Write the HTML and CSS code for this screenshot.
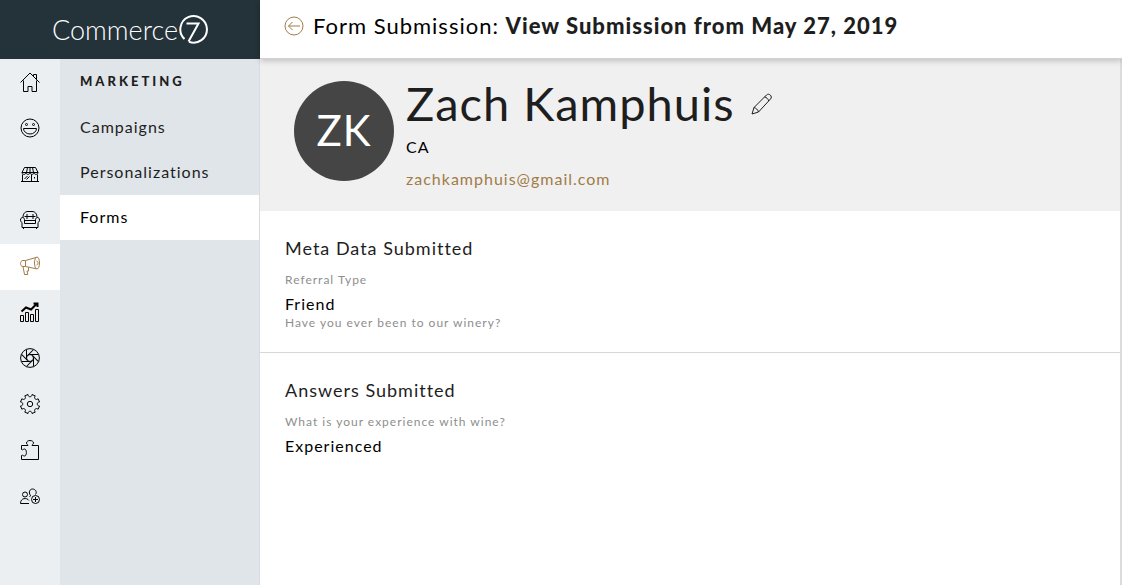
FILE: index.html
```html
<!DOCTYPE html>
<html lang="en">
<head>
  <meta charset="utf-8">
  <meta name="viewport" content="width=device-width, initial-scale=1">
  <title>Form Submission</title>
  <link rel="stylesheet" href="styles.css">
</head>
<body>
  <aside class="sidebar">
    <a class="logo" href="#" aria-label="Commerce7">
      <span>Commerce</span>
      <svg width="30" height="30" viewBox="0 0 30 30">
        <path d="M6.500 25A13.300 13.300 0 1 1 11 27.800"/>
        <path d="M8.500 9.500H20.500L10.500 27.500"/>
      </svg>
    </a>
    <div class="menus">
      <nav class="icon-nav">
        <a href="#" aria-label="Home">
          <svg viewBox="0 0 20 20"><path d="M.5 10.500 10 1l9.500 9.500M13.500 4V2.500h3V7.500M3.500 8.500v11h4.500v-5h4v5h4.500v-11"/></svg>
        </a>
        <a href="#" aria-label="Customers">
          <svg viewBox="0 0 20 20"><circle cx="10" cy="10" r="9"/><circle cx="6.500" cy="6.500" r="1"/><circle cx="13.500" cy="6.500" r="1"/><path d="M3.500 10.500h13a6.500 5.500 0 0 1-13 0z"/></svg>
        </a>
        <a href="#" aria-label="Store">
          <svg viewBox="0 0 20 20"><path d="M4.500 3.500h11L18 8.500H2zM7.500 3.500l-1 5M12.500 3.500l1 5M10 3.500v5M2 8.500c0 2.500 4 2.500 4 0 0 2.500 4 2.500 4 0 0 2.500 4 2.500 4 0 0 2.500 4 2.500 4 0M2.500 10.500v7M17.500 10.500v7M1 17.500h18M11.500 17.500v-7M4.500 15l3-3M6.500 15.500l3-3M14.500 13v1.500"/></svg>
        </a>
        <a href="#" aria-label="Club">
          <svg viewBox="0 0 20 20"><path d="M3 7.500C3 3.500 5 1.500 8 1.500h4c3 0 5 2 5 6M4.500 13.500v-4c-.5-3-4-2.500-4 .5 0 1 .5 2 1.500 2.500v5h16v-5c1-.5 1.500-1.500 1.500-2.500 0-3-3.500-3.500-4-.5v4zM4.500 10.500h11M3.500 17.500V19M16.500 17.500V19"/><path d="M7 4v5M13 4v5M4.500 6.500h11"/></svg>
        </a>
        <a class="active" href="#" aria-label="Marketing">
          <svg viewBox="0 0 20 20"><path d="M5.500 4.500 16 1.500M5.500 10.500l10.500 2.200M5.500 4.500H3C-.3 4.500-.3 10.500 3 10.500h2.500zM3 10.500l1.500 8h3.300L7 15h1.500V11.300M16.500 5c2 0 2 4 0 4"/><ellipse cx="17" cy="7" rx="2.500" ry="6"/></svg>
        </a>
        <a href="#" aria-label="Reports">
          <svg viewBox="0 0 20 20"><path d="M.5 13.500h3v6h-3zM5.500 10.500h3v9h-3zM10.500 12.500h3v7h-3zM15.500 7.500h3v12h-3z"/><path class="thick" d="M1.500 9.500 6 5.500l5 2L17 1.500M13.500 1.500H17.500V5"/></svg>
        </a>
        <a href="#" aria-label="Gallery">
          <svg viewBox="0 0 20 20">
            <circle cx="10" cy="10" r="9.400"/>
            <circle cx="10" cy="10" r="3.500"/>
            <path d="M13.500 10v8.500"/>
            <path d="M13.500 10v8.500" transform="rotate(45 10 10)"/>
            <path d="M13.500 10v8.500" transform="rotate(90 10 10)"/>
            <path d="M13.500 10v8.500" transform="rotate(135 10 10)"/>
            <path d="M13.500 10v8.500" transform="rotate(180 10 10)"/>
            <path d="M13.500 10v8.500" transform="rotate(225 10 10)"/>
            <path d="M13.500 10v8.500" transform="rotate(270 10 10)"/>
            <path d="M13.500 10v8.500" transform="rotate(315 10 10)"/>
          </svg>
        </a>
        <a href="#" aria-label="Settings">
          <svg viewBox="0 0 20 20"><circle cx="10" cy="10" r="2.700"/><path d="M8 .5 C8 3.500 12 3.500 12 .5L15.300 1.900C13.200 4 16 6.800 18.100 4.700L19.500 8C16.500 8 16.500 12 19.500 12L18.100 15.300C16 13.200 13.200 16 15.300 18.100L12 19.500C12 16.500 8 16.500 8 19.500L4.700 18.100C6.800 16 4 13.200 1.900 15.300L.5 12C3.500 12 3.500 8 .5 8L1.900 4.700C4 6.800 6.800 4 4.700 1.900z"/></svg>
        </a>
        <a href="#" aria-label="Apps">
          <svg viewBox="0 0 20 20"><path d="M1.500 9.500v-4h6.500C8 4.500 6.500 4.500 6.500 3c0-3.300 7-3.300 7 0 0 1.500-1.500 1.500-1.500 2.500h6.500v14h-17v-4c1.500-1 1.500.5 3 .5 2.500 0 2.500-7 0-7-1.500 0-1.500 1.500-3 .5z"/></svg>
        </a>
        <a href="#" aria-label="Users">
          <svg viewBox="0 0 20 20"><circle cx="5" cy="8.500" r="2.500"/><path d="M9 17.500H.5c0-6 6.500-6 8.500-3M10.500 9.500C8 6 10 3 12.500 3s5 2.500 3 5.500M11 9.500l-1.500 1"/><circle cx="15.500" cy="13.500" r="4"/><path d="M15.500 11v5M13 13.500h5"/></svg>
        </a>
      </nav>
      <nav class="sub-nav">
        <h2>Marketing</h2>
        <a href="#">Campaigns</a>
        <a href="#">Personalizations</a>
        <a class="active" href="#">Forms</a>
      </nav>
    </div>
  </aside>
  <main>
    <header class="top-bar">
      <a class="back" href="#" aria-label="Back">
        <svg viewBox="0 0 20 20"><circle cx="10" cy="10" r="9"/><path d="M16 10H4.500M8.500 6l-4 4 4 4"/></svg>
      </a>
      <h1>Form Submission: <strong>View Submission from May 27, 2019</strong></h1>
    </header>
    <div class="content">
      <section class="profile">
        <div class="avatar">ZK</div>
        <div class="details">
          <div class="name">
            <h2>Zach Kamphuis</h2>
            <button type="button" aria-label="Edit">
              <svg viewBox="0 0 22 22"><path d="M1 21l2-6.500L15.500 2c2.500-2.500 6.500 1.500 4 4L7.500 19zM13.500 4c2 .3 3.800 2 4.200 4M3 14.500c2 .5 3.800 2 4.500 4.500"/></svg>
            </button>
          </div>
          <p>CA</p>
          <a href="mailto:zachkamphuis@gmail.com">zachkamphuis@gmail.com</a>
        </div>
      </section>
      <section class="answers">
        <h3>Meta Data Submitted</h3>
        <dl>
          <dt>Referral Type</dt>
          <dd>Friend</dd>
          <dt>Have you ever been to our winery?</dt>
        </dl>
      </section>
      <section class="answers">
        <h3>Answers Submitted</h3>
        <dl>
          <dt>What is your experience with wine?</dt>
          <dd>Experienced</dd>
        </dl>
      </section>
    </div>
  </main>
</body>
</html>
```
FILE: styles.css
```css
* {
  box-sizing: border-box;
}

body {
  display: flex;
  min-height: 100vh;
  margin: 0;
  background: #fff;
  color: #000;
  font-family: 'Lato', sans-serif;
  font-size: 16px;
  letter-spacing: 1px;
}

h1, h2, h3, p, dl, dd {
  margin: 0;
  font-weight: normal;
}

a {
  color: inherit;
  text-decoration: none;
}

svg {
  fill: none;
  stroke: currentColor;
}

/* sidebar */
.sidebar {
  display: flex;
  flex-direction: column;
  width: 260px;
  flex-shrink: 0;
}

.logo {
  display: flex;
  align-items: center;
  justify-content: center;
  height: 59px;
  padding-bottom: 1px;
  background: #243239;
  color: #fff;
  font-size: 27px;
  font-weight: 300;
  letter-spacing: 0;
}

.logo svg {
  stroke-width: 2;
}

.menus {
  display: flex;
  flex: 1;
}

.icon-nav {
  width: 60px;
  padding-top: 1px;
  background: #ebeff2;
}

.icon-nav a {
  display: flex;
  align-items: center;
  justify-content: center;
  height: 46px;
  padding-bottom: 2px;
}

.icon-nav svg {
  width: 20px;
  height: 20px;
}

.icon-nav .thick {
  stroke-width: 2;
}

.icon-nav .active {
  background: #fff;
  color: #a07c48;
}

.sub-nav {
  flex: 1;
  border-right: 1px solid #d8dcdf;
  background: #e0e5e9;
  color: #1e1e1e;
}

.sub-nav h2 {
  padding: 0 20px 2px;
  font-size: 13px;
  font-weight: 900;
  letter-spacing: 3px;
  line-height: 44px;
  text-transform: uppercase;
}

.sub-nav a {
  display: block;
  padding: 0 20px 2px;
  line-height: 43px;
}

.sub-nav .active {
  background: #fff;
  color: #000;
}

/* page */
main {
  display: flex;
  flex: 1;
  flex-direction: column;
  min-width: 0;
}

.top-bar {
  position: relative;
  display: flex;
  align-items: center;
  gap: 9px;
  height: 59px;
  padding: 0 24px 8px;
  border-bottom: 1px solid #d2d2d2;
  box-shadow: 0 2px 6px rgba(0, 0, 0, 0.2);
}

.top-bar h1 {
  font-size: 22px;
}

.top-bar strong {
  color: #1e1e1e;
  font-weight: 900;
}

.back {
  display: flex;
  padding-top: 2px;
  color: #a07c48;
}

.back svg {
  width: 20px;
  height: 20px;
}

.content {
  flex: 1;
  border-right: 2px solid #dcdcdc;
}

.profile {
  display: flex;
  gap: 12px;
  padding: 22px 34px 22px;
  background: #f0f0f0;
}

.avatar {
  width: 100px;
  height: 100px;
  border-radius: 50%;
  background: #454545;
  color: #fff;
  font-size: 42px;
  line-height: 98px;
  text-align: center;
}

.name {
  display: flex;
  align-items: center;
  gap: 16px;
}

.name h2 {
  color: #1e1e1e;
  font-size: 47px;
  line-height: 44px;
}

.name button {
  display: flex;
  padding: 2px 0 0;
  border: 0;
  background: none;
  color: #1e1e1e;
}

.name svg {
  width: 22px;
  height: 22px;
}

.details p {
  margin: 12px 0;
  line-height: 20px;
}

.details > a {
  display: block;
  color: #a07c48;
  line-height: 20px;
}

.answers {
  padding: 25px 25px 20px;
}

.answers + .answers {
  border-top: 1px solid #d8d8d8;
}

.answers h3 {
  margin-bottom: 11px;
  color: #1e1e1e;
  font-size: 18px;
  line-height: 24px;
}

.answers dt {
  color: #8e8e8e;
  font-size: 12px;
  line-height: 18px;
}

.answers dd {
  margin-top: 5px;
  line-height: 20px;
}
```
